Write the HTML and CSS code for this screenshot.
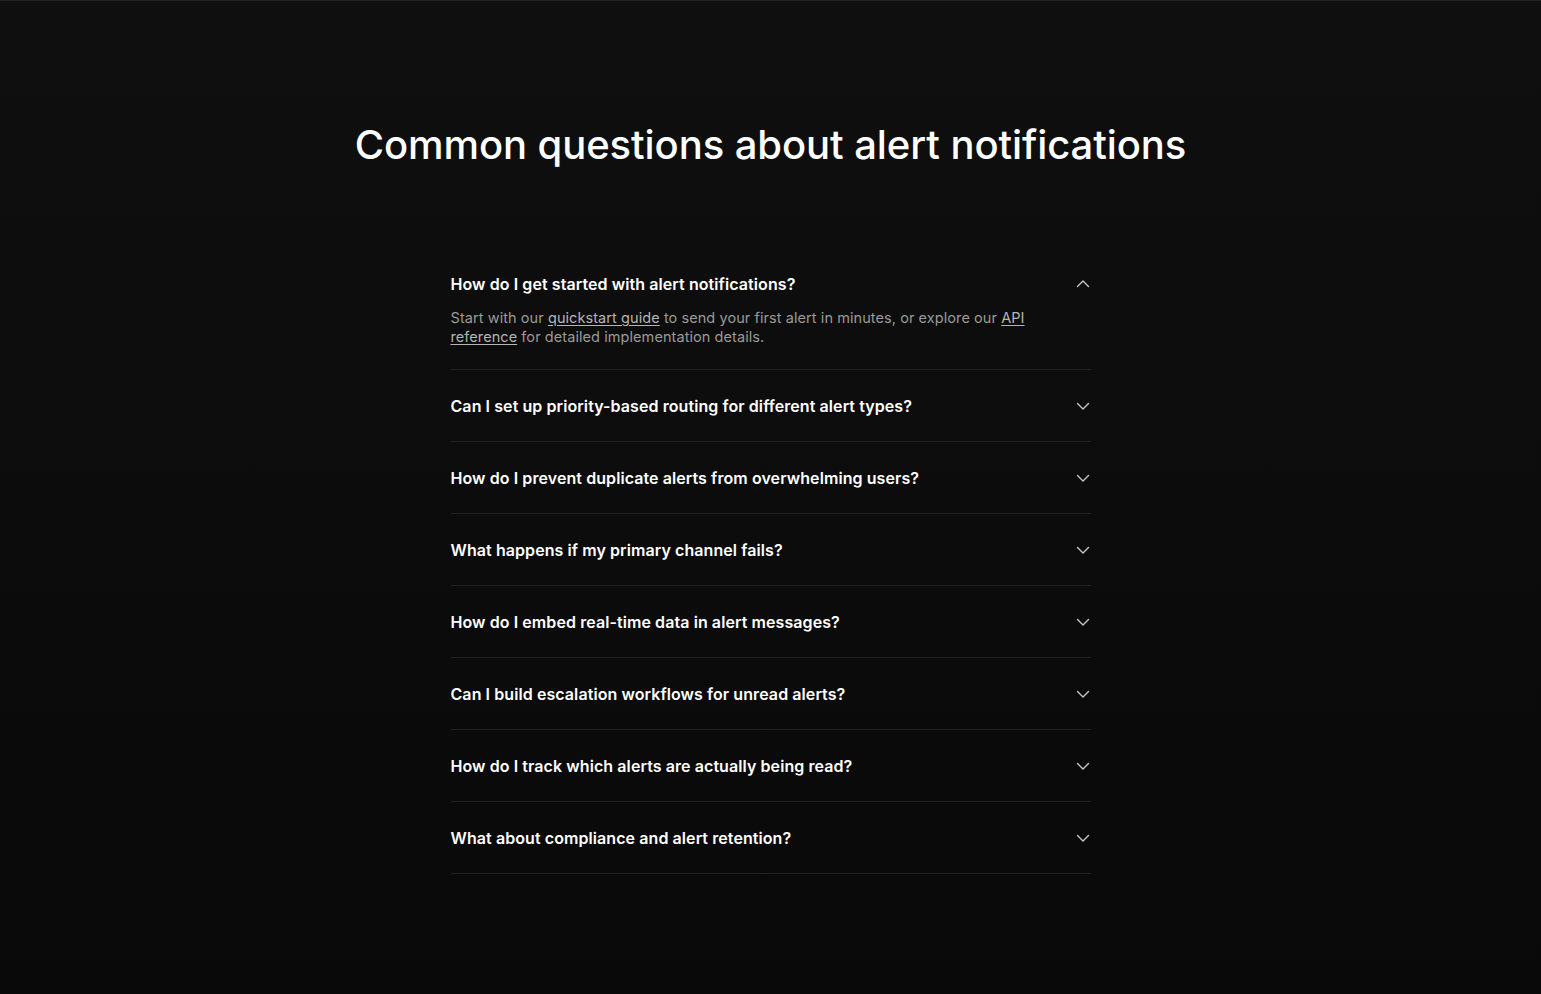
FILE: index.html
```html
<!DOCTYPE html>
<html lang="en">
<head>
<meta charset="utf-8">
<title>FAQ</title>
<link rel="stylesheet" href="styles.css">
</head>
<body>
<main class="page">
  <h1 class="title">Common questions about alert notifications</h1>
  <div class="faq">
    <div class="item open">
      <div class="q"><span class="q-text">How do I get started with alert notifications?</span>
        <svg class="chev" viewBox="0 0 16 16" width="16" height="16"><path d="M2.5 10.5 8 5l5.5 5.5"/></svg></div>
      <p class="a">Start with our <a href="#">quickstart guide</a> to send your first alert in minutes, or explore our <a href="#">API reference</a> for detailed implementation details.</p>
    </div>
    <div class="item">
      <div class="q"><span class="q-text">Can I set up priority-based routing for different alert types?</span>
        <svg class="chev" viewBox="0 0 16 16" width="16" height="16"><path d="M2.5 5.5 8 11l5.5-5.5"/></svg></div>
    </div>
    <div class="item">
      <div class="q"><span class="q-text">How do I prevent duplicate alerts from overwhelming users?</span>
        <svg class="chev" viewBox="0 0 16 16" width="16" height="16"><path d="M2.5 5.5 8 11l5.5-5.5"/></svg></div>
    </div>
    <div class="item">
      <div class="q"><span class="q-text">What happens if my primary channel fails?</span>
        <svg class="chev" viewBox="0 0 16 16" width="16" height="16"><path d="M2.5 5.5 8 11l5.5-5.5"/></svg></div>
    </div>
    <div class="item">
      <div class="q"><span class="q-text">How do I embed real-time data in alert messages?</span>
        <svg class="chev" viewBox="0 0 16 16" width="16" height="16"><path d="M2.5 5.5 8 11l5.5-5.5"/></svg></div>
    </div>
    <div class="item">
      <div class="q"><span class="q-text">Can I build escalation workflows for unread alerts?</span>
        <svg class="chev" viewBox="0 0 16 16" width="16" height="16"><path d="M2.5 5.5 8 11l5.5-5.5"/></svg></div>
    </div>
    <div class="item">
      <div class="q"><span class="q-text">How do I track which alerts are actually being read?</span>
        <svg class="chev" viewBox="0 0 16 16" width="16" height="16"><path d="M2.5 5.5 8 11l5.5-5.5"/></svg></div>
    </div>
    <div class="item">
      <div class="q"><span class="q-text">What about compliance and alert retention?</span>
        <svg class="chev" viewBox="0 0 16 16" width="16" height="16"><path d="M2.5 5.5 8 11l5.5-5.5"/></svg></div>
    </div>
  </div>
</main>
</body>
</html>
```

FILE: styles.css
```css
html, body {
  margin: 0;
  padding: 0;
}
body {
  min-height: 100vh;
  background: linear-gradient(180deg, #0f0f0f 0%, #090909 100%);
  border-top: 1px solid #232323;
  box-sizing: border-box;
  font-family: Inter, "Liberation Sans", sans-serif;
  color: #ffffff;
}
.page {
  display: flex;
  flex-direction: column;
  align-items: center;
  padding-top: 115px;
}
.title {
  margin: 0;
  font-size: 40px;
  line-height: 58px;
  font-weight: 500;
  letter-spacing: -0.002em;
  color: #ffffff;
}
.faq {
  width: 640px;
  margin-top: 74px;
}
.item {
  border-bottom: 1px solid #222222;
}
.q {
  display: flex;
  align-items: center;
  justify-content: space-between;
  padding: 24px 0 23px;
}
.q-text {
  font-size: 16px;
  line-height: 24px;
  font-weight: 600;
  letter-spacing: 0.005em;
  color: #ffffff;
}
.chev {
  flex: none;
  fill: none;
  stroke: #c8c8c8;
  stroke-width: 1.4;
  stroke-linecap: round;
  stroke-linejoin: round;
}
.item.open .q {
  padding-bottom: 12px;
}
.a {
  margin: 0;
  padding: 0 48px 23px 0;
  font-size: 14.5px;
  line-height: 19px;
  letter-spacing: 0.005em;
  color: #9a9a9a;
}
.a a {
  color: #b5b5b5;
  text-decoration: underline;
  text-underline-offset: 2px;
}
```
